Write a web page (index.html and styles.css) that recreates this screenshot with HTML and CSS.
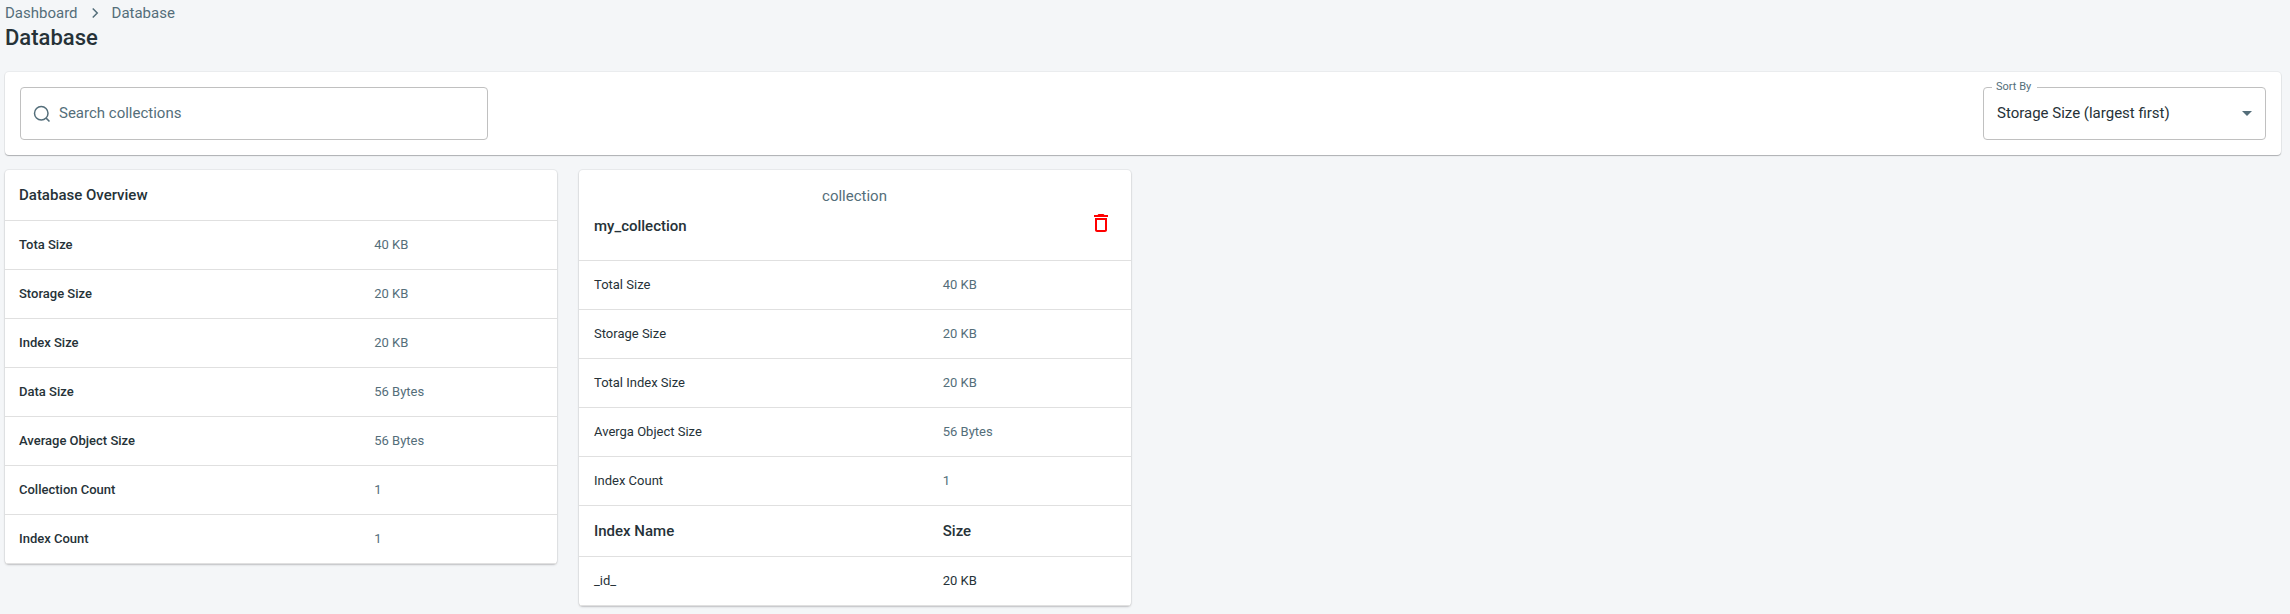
FILE: index.html
```html
<!DOCTYPE html>
<html lang="en">
<head>
<meta charset="utf-8">
<title>Database</title>
<link rel="stylesheet" href="styles.css">
</head>
<body>
<main class="page">
  <nav class="breadcrumbs" aria-label="Breadcrumb">
    <a href="#">Dashboard</a>
    <svg class="chevron" viewBox="0 0 24 24" aria-hidden="true"><path d="m9 18 6-6-6-6"/></svg>
    <a href="#">Database</a>
  </nav>
  <h1 class="title">Database</h1>

  <section class="card toolbar">
    <label class="search">
      <svg class="search-icon" viewBox="0 0 24 24" aria-hidden="true"><circle cx="11" cy="11" r="9"/><path d="M22 22l-4.500-4.500"/></svg>
      <input type="search" placeholder="Search collections" aria-label="Search collections">
    </label>
    <div class="sort">
      <label class="sort-label" for="sort">Sort By</label>
      <select id="sort">
        <option>Storage Size (largest first)</option>
        <option>Storage Size (smallest first)</option>
      </select>
      <svg class="sort-arrow" viewBox="0 0 24 24" aria-hidden="true"><path d="M7 10l5 5 5-5z"/></svg>
    </div>
  </section>

  <div class="grid">
    <section class="card">
      <h2 class="card-title">Database Overview</h2>
      <table class="stats overview">
        <colgroup><col class="name"><col></colgroup>
        <tbody>
          <tr><th scope="row">Tota Size</th><td>40 KB</td></tr>
          <tr><th scope="row">Storage Size</th><td>20 KB</td></tr>
          <tr><th scope="row">Index Size</th><td>20 KB</td></tr>
          <tr><th scope="row">Data Size</th><td>56 Bytes</td></tr>
          <tr><th scope="row">Average Object Size</th><td>56 Bytes</td></tr>
          <tr><th scope="row">Collection Count</th><td>1</td></tr>
          <tr><th scope="row">Index Count</th><td>1</td></tr>
        </tbody>
      </table>
    </section>

    <section class="card">
      <header class="collection-header">
        <p class="kind">collection</p>
        <div class="collection-row">
          <h2 class="collection-name">my_collection</h2>
          <button class="delete" type="button" aria-label="Delete collection">
            <svg viewBox="0 0 24 24" aria-hidden="true"><path d="M6 19c0 1.100.9 2 2 2h8c1.100 0 2-.9 2-2V7H6v12zM8 9h8v10H8V9zm7.500-5l-1-1h-5l-1 1H5v2h14V4h-3.500z"/></svg>
          </button>
        </div>
      </header>
      <table class="stats collection">
        <colgroup><col class="name"><col></colgroup>
        <tbody>
          <tr><th scope="row">Total Size</th><td>40 KB</td></tr>
          <tr><th scope="row">Storage Size</th><td>20 KB</td></tr>
          <tr><th scope="row">Total Index Size</th><td>20 KB</td></tr>
          <tr><th scope="row">Averga Object Size</th><td>56 Bytes</td></tr>
          <tr><th scope="row">Index Count</th><td>1</td></tr>
        </tbody>
        <tbody class="indexes">
          <tr class="index-head"><th scope="col">Index Name</th><th scope="col">Size</th></tr>
          <tr><td>_id_</td><td>20 KB</td></tr>
        </tbody>
      </table>
    </section>
  </div>
</main>
</body>
</html>
```

FILE: styles.css
```css
:root {
  --text: #263238;
  --muted: #546e7a;
  --line: #e0e0e0;
  --outline: #c0c0c0;
}

* {
  box-sizing: border-box;
}

body {
  margin: 0;
  background: #f4f6f8;
  color: var(--text);
  font-family: Roboto, "Liberation Sans", sans-serif;
  font-size: 15px;
  line-height: 22px;
}

h1,
h2,
p {
  margin: 0;
  font-weight: 500;
}

.page {
  padding: 2px 9px 8px 5px;
}

.breadcrumbs {
  display: flex;
  align-items: center;
  gap: 8px;
}

.breadcrumbs a {
  color: var(--muted);
  text-decoration: none;
}

.chevron {
  width: 18px;
  height: 18px;
  fill: none;
  stroke: var(--muted);
  stroke-width: 2;
}

.title {
  margin-bottom: 20px;
  font-size: 22px;
  line-height: 28px;
}

.card {
  background: #fff;
  border-radius: 4px;
  box-shadow: 0 0 0 1px rgba(63, 63, 68, 0.05), 0 1px 2px rgba(63, 63, 68, 0.25);
}

.toolbar {
  display: flex;
  justify-content: space-between;
  margin-bottom: 15px;
  padding: 15px;
  box-shadow: 0 0 0 1px rgba(63, 63, 68, 0.05), 0 1px 1px rgba(63, 63, 68, 0.35);
}

.search {
  display: flex;
  align-items: center;
  gap: 8px;
  width: 468px;
  height: 53px;
  padding: 0 12px;
  border: 1px solid var(--outline);
  border-radius: 4px;
}

.search-icon {
  width: 18px;
  height: 18px;
  fill: none;
  stroke: var(--muted);
  stroke-width: 2;
}

.search input {
  flex: 1;
  padding: 0 0 2px;
  border: 0;
  outline: 0;
  background: none;
  color: var(--text);
  font: inherit;
}

.search input::placeholder {
  color: var(--muted);
  opacity: 1;
}

.sort {
  position: relative;
  width: 283px;
}

.sort select {
  width: 100%;
  height: 53px;
  padding: 0 32px 2px 13px;
  border: 1px solid var(--outline);
  border-radius: 4px;
  appearance: none;
  background: #fff;
  color: var(--text);
  font: inherit;
}

.sort-label {
  position: absolute;
  top: -7px;
  left: 9px;
  padding: 0 6px 0 4px;
  background: #fff;
  color: var(--muted);
  font-size: 11px;
  line-height: 14px;
}

.sort-arrow {
  position: absolute;
  top: 14px;
  right: 7px;
  width: 24px;
  height: 24px;
  fill: var(--muted);
  pointer-events: none;
}

.grid {
  display: grid;
  grid-template-columns: repeat(4, 1fr);
  gap: 22px;
  align-items: start;
  padding-right: 2px;
}

.card-title {
  padding: 14px;
  border-bottom: 1px solid var(--line);
  font-size: 15px;
}

.collection-header {
  padding: 15px 6px 15px 15px;
  border-bottom: 1px solid var(--line);
}

.kind {
  padding-right: 10px;
  color: var(--muted);
  font-weight: 400;
  text-align: center;
}

.collection-row {
  display: flex;
  align-items: center;
  justify-content: space-between;
}

.collection-name {
  font-size: 15px;
}

.delete {
  display: flex;
  padding: 4px 12px 10px;
  border: 0;
  background: none;
  cursor: pointer;
}

.delete svg {
  width: 24px;
  height: 24px;
  fill: #f00;
}

.stats {
  width: 100%;
  border-spacing: 0;
  table-layout: fixed;
  font-size: 13px;
  line-height: 18px;
}

.stats th,
.stats td {
  padding: 15px;
  border-bottom: 1px solid var(--line);
  text-align: left;
}

.stats th {
  font-weight: 400;
}

.stats td {
  color: var(--muted);
}

.stats tr > :last-child {
  padding-left: 16px;
}

.overview th {
  padding-left: 14px;
  font-weight: 500;
}

.overview .name {
  width: 64%;
}

.collection .name {
  width: 63%;
}

.stats .index-head th {
  font-size: 15px;
  font-weight: 500;
  line-height: 20px;
}

.stats.collection .indexes td {
  color: var(--text);
}
```
